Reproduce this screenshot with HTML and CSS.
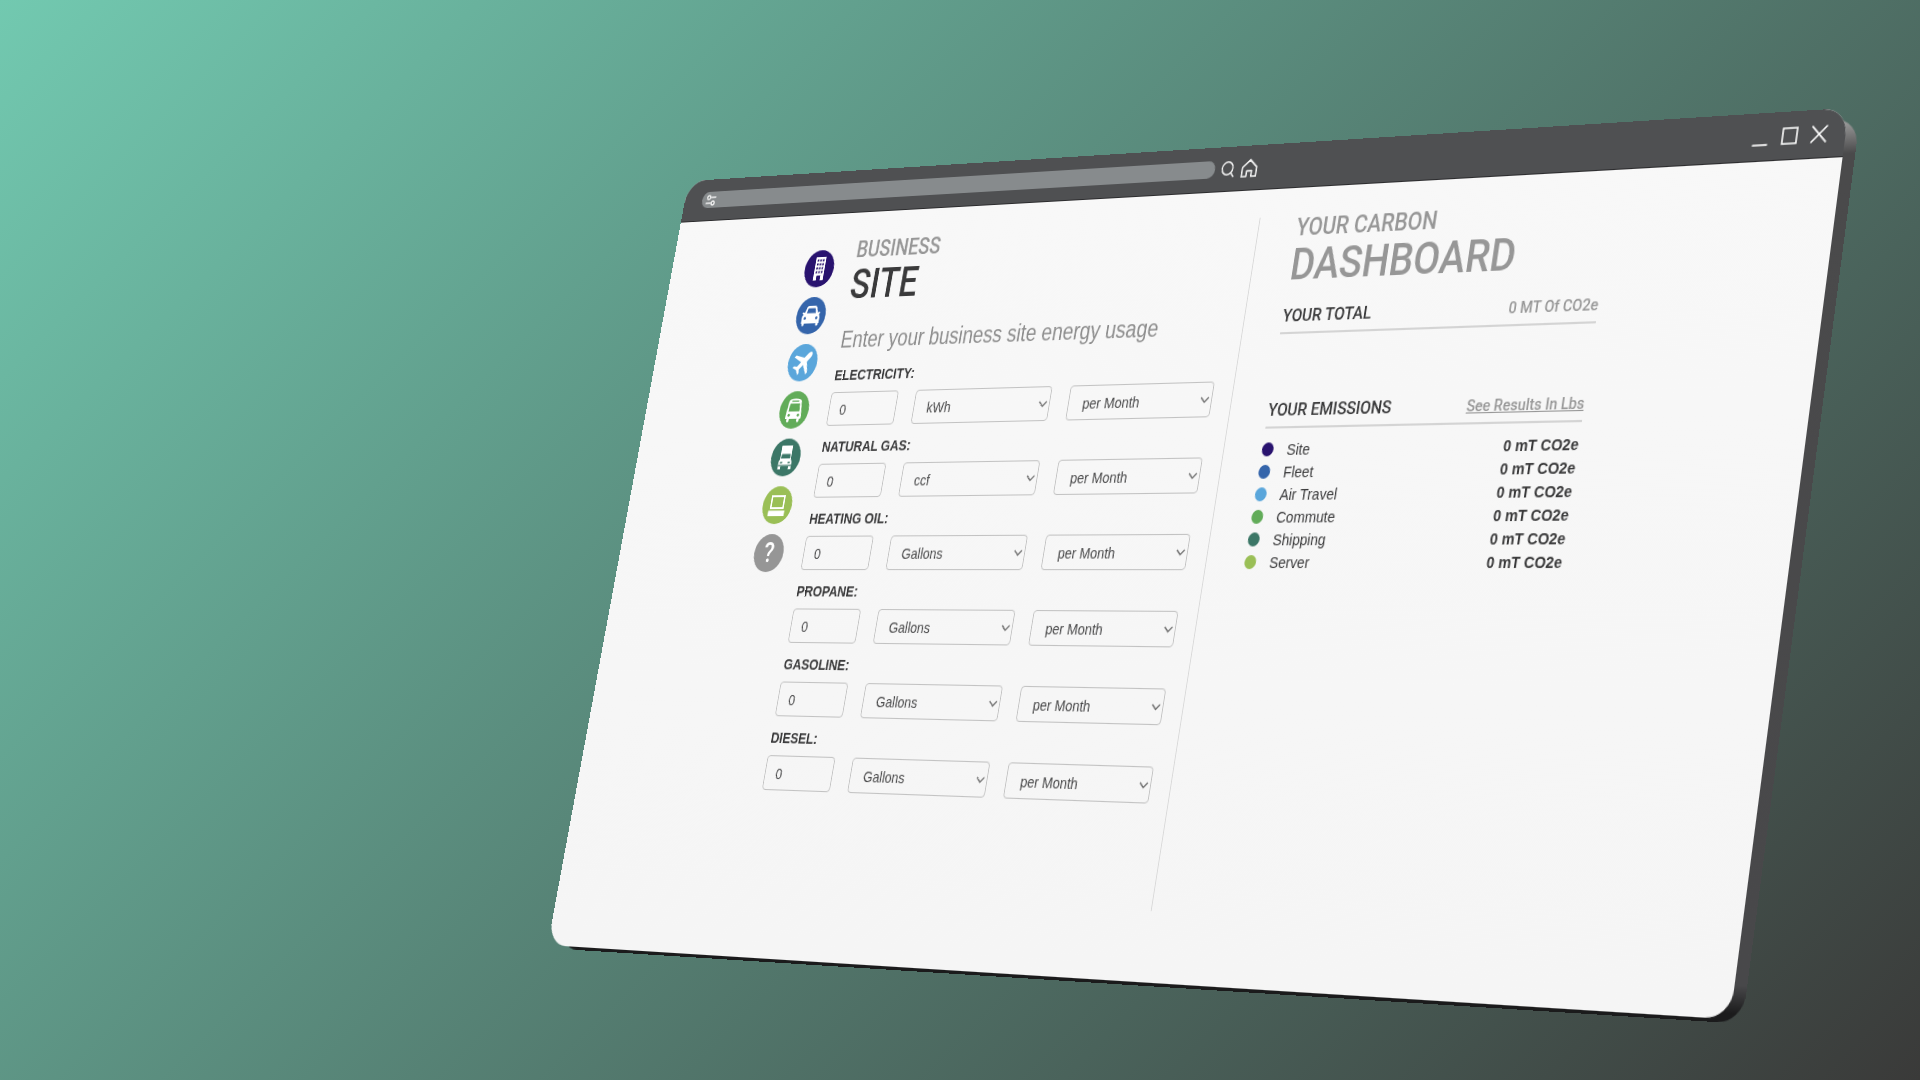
FILE: index.html
```html
<!DOCTYPE html>
<html lang="en">
<head>
<meta charset="utf-8">
<title>Carbon Calculator</title>
<link rel="stylesheet" href="styles.css">
</head>
<body>
<main class="stage">
  <div class="slab">
    <div class="window">
      <header class="titlebar">
        <div class="address">
          <svg class="sliders" viewBox="0 0 14 12" aria-hidden="true"><g fill="none" stroke="#f4f4f4" stroke-width="1.6"><circle cx="4" cy="3" r="2"/><path d="M7 3h6.5M.5 9H7"/><circle cx="10" cy="9" r="2"/></g></svg>
          <input class="url" type="text" aria-label="Address">
        </div>
        <button class="tool tool-search" type="button" aria-label="Search"><svg viewBox="0 0 16 16"><g fill="none" stroke="#f4f4f4" stroke-width="1.5" stroke-linecap="round"><circle cx="7.500" cy="7" r="6.200"/><path d="M12 11.500L15 15.200"/></g></svg></button>
        <button class="tool tool-home" type="button" aria-label="Home"><svg viewBox="0 0 20 18"><path d="M1.8 8.2L10 1l8.200 7.200V17h-5.400v-5.400H7.200V17H1.800z" fill="none" stroke="#f4f4f4" stroke-width="1.7" stroke-linejoin="round"/></svg></button>
        <div class="controls">
          <button class="tool" type="button" aria-label="Minimize"><svg viewBox="0 0 16 16"><path d="M.5 15h15" stroke="#fff" stroke-width="1.6"/></svg></button>
          <button class="tool" type="button" aria-label="Maximize"><svg viewBox="0 0 16 16"><path d="M1 1h14v14H1z" fill="none" stroke="#fff" stroke-width="1.600"/></svg></button>
          <button class="tool" type="button" aria-label="Close"><svg viewBox="0 0 16 16"><path d="M1 1l14 14M15 1L1 15" stroke="#fff" stroke-width="1.700" stroke-linecap="round"/></svg></button>
        </div>
      </header>
      <div class="content">
        <nav class="steps" aria-label="Sections">
          <a href="#site" class="step site" aria-label="Site"><svg viewBox="0 0 38 38"><path fill="#fff" d="M13 7h13v24h-4v-5h-5v5h-4z"/><path stroke="#29136f" stroke-width="2" d="M15 10.500h9M15 14.500h9M15 18.500h9M15 22.500h9" stroke-dasharray="2.200 1.200"/></svg></a>
          <a href="#fleet" class="step fleet" aria-label="Fleet"><svg viewBox="0 0 38 38"><path fill="#fff" d="M12.500 10.500Q13 9 15 9h8q2 0 2.500 1.500L27.500 16l2-.500q1 0 1 1l-1.500 1.500q1.500 1 1.500 3V27h-1v1.500q0 1-1.500 1T26.500 28.500V27h-15v1.500q0 1-1.500 1T8.500 28.500V27h-1v-6q0-2 1.500-3L7.500 16.500q0-1 1-1l2 .500z"/><path fill="#3565ab" d="M14.500 11.500h9l1.500 5H13z"/><circle cx="11.500" cy="21.500" r="1.500" fill="#3565ab"/><circle cx="26.500" cy="21.500" r="1.500" fill="#3565ab"/></svg></a>
          <a href="#air" class="step air" aria-label="Air travel"><svg viewBox="0 0 38 38"><path fill="#fff" d="M29.500 8.500c1.500 1.500.500 4-1 5.500l-4 4 2.500 11-2 2-5-9.500-4.500 4.500.500 4-1.500 1.500-2.500-5-5-2.500L8.500 22.500l4 .500 4.500-4.500L7.500 13.500l2-2 11 2.500 4-4c1.500-1.500 3.500-3 5-1.500z"/></svg></a>
          <a href="#commute" class="step commute" aria-label="Commute"><svg viewBox="0 0 38 38"><path fill="#fff" d="M11 10q.500-2.500 8-2.500T27 10l2 14v4h-2v2q0 1.500-1.500 1.500T24 30v-2H14v2q0 1.500-1.500 1.500T11 30v-2H9v-4z"/><path fill="#62ac59" d="M14.500 9.500h9v1.300h-9zM12.800 12.500h12.400l1 8H11.800z"/><circle cx="13" cy="24.300" r="1.500" fill="#62ac59"/><circle cx="25" cy="24.300" r="1.500" fill="#62ac59"/></svg></a>
          <a href="#shipping" class="step shipping" aria-label="Shipping"><svg viewBox="0 0 38 38"><path fill="#fff" d="M12 7h14v14l1.500 2v8H24v-3H14v3h-3.500v-8l1.500-2z"/><path fill="#3c7767" d="M13.500 15.500h11l.500 4.500H13zM12.500 23.500h3v1.500h-3zM22.500 23.500h3v1.500h-3zM10.500 26.500h17v1.200h-17z"/></svg></a>
          <a href="#server" class="step server" aria-label="Server"><svg viewBox="0 0 38 38"><path fill="#fff" fill-rule="evenodd" d="M10 9h18v14H10zM12 11v10h14V11zM8.500 24.500h21V30h-21z"/></svg></a>
          <a href="#help" class="step help" aria-label="Help">?</a>
        </nav>
        <section class="usage">
          <p class="eyebrow">BUSINESS</p>
          <h1 class="title title-main">SITE</h1>
          <p class="lead">Enter your business site energy usage</p>
          <form class="fields">
            <div class="field"><label class="name" for="electricity">ELECTRICITY:</label>
              <input class="box" id="electricity" type="text" value="0">
              <span class="pick"><select class="box" aria-label="Electricity unit"><option>kWh</option></select><svg class="arrow" viewBox="0 0 10 6"><path d="M1 .8l4 4 4-4"/></svg></span>
              <span class="pick"><select class="box" aria-label="Electricity period"><option>per Month</option></select><svg class="arrow" viewBox="0 0 10 6"><path d="M1 .8l4 4 4-4"/></svg></span></div>
            <div class="field"><label class="name" for="gas">NATURAL GAS:</label>
              <input class="box" id="gas" type="text" value="0">
              <span class="pick"><select class="box" aria-label="Natural gas unit"><option>ccf</option></select><svg class="arrow" viewBox="0 0 10 6"><path d="M1 .8l4 4 4-4"/></svg></span>
              <span class="pick"><select class="box" aria-label="Natural gas period"><option>per Month</option></select><svg class="arrow" viewBox="0 0 10 6"><path d="M1 .8l4 4 4-4"/></svg></span></div>
            <div class="field"><label class="name" for="oil">HEATING OIL:</label>
              <input class="box" id="oil" type="text" value="0">
              <span class="pick"><select class="box" aria-label="Heating oil unit"><option>Gallons</option></select><svg class="arrow" viewBox="0 0 10 6"><path d="M1 .8l4 4 4-4"/></svg></span>
              <span class="pick"><select class="box" aria-label="Heating oil period"><option>per Month</option></select><svg class="arrow" viewBox="0 0 10 6"><path d="M1 .8l4 4 4-4"/></svg></span></div>
            <div class="field"><label class="name" for="propane">PROPANE:</label>
              <input class="box" id="propane" type="text" value="0">
              <span class="pick"><select class="box" aria-label="Propane unit"><option>Gallons</option></select><svg class="arrow" viewBox="0 0 10 6"><path d="M1 .8l4 4 4-4"/></svg></span>
              <span class="pick"><select class="box" aria-label="Propane period"><option>per Month</option></select><svg class="arrow" viewBox="0 0 10 6"><path d="M1 .8l4 4 4-4"/></svg></span></div>
            <div class="field"><label class="name" for="gasoline">GASOLINE:</label>
              <input class="box" id="gasoline" type="text" value="0">
              <span class="pick"><select class="box" aria-label="Gasoline unit"><option>Gallons</option></select><svg class="arrow" viewBox="0 0 10 6"><path d="M1 .8l4 4 4-4"/></svg></span>
              <span class="pick"><select class="box" aria-label="Gasoline period"><option>per Month</option></select><svg class="arrow" viewBox="0 0 10 6"><path d="M1 .8l4 4 4-4"/></svg></span></div>
            <div class="field"><label class="name" for="diesel">DIESEL:</label>
              <input class="box" id="diesel" type="text" value="0">
              <span class="pick"><select class="box" aria-label="Diesel unit"><option>Gallons</option></select><svg class="arrow" viewBox="0 0 10 6"><path d="M1 .8l4 4 4-4"/></svg></span>
              <span class="pick"><select class="box" aria-label="Diesel period"><option>per Month</option></select><svg class="arrow" viewBox="0 0 10 6"><path d="M1 .8l4 4 4-4"/></svg></span></div>
          </form>
        </section>
        <aside class="dashboard">
          <p class="eyebrow">YOUR CARBON</p>
          <h2 class="title">DASHBOARD</h2>
          <div class="bar"><h3 class="bar-name">YOUR TOTAL</h3><span class="bar-side">0 MT Of CO2e</span></div>
          <div class="bar bar-emissions"><h3 class="bar-name">YOUR EMISSIONS</h3><a class="bar-side" href="#lbs">See Results In Lbs</a></div>
          <table class="emissions">
            <tr><th scope="row"><i class="dot site"></i>Site</th><td>0 mT CO2e</td></tr>
            <tr><th scope="row"><i class="dot fleet"></i>Fleet</th><td>0 mT CO2e</td></tr>
            <tr><th scope="row"><i class="dot air"></i>Air Travel</th><td>0 mT CO2e</td></tr>
            <tr><th scope="row"><i class="dot commute"></i>Commute</th><td>0 mT CO2e</td></tr>
            <tr><th scope="row"><i class="dot shipping"></i>Shipping</th><td>0 mT CO2e</td></tr>
            <tr><th scope="row"><i class="dot server"></i>Server</th><td>0 mT CO2e</td></tr>
          </table>
        </aside>
      </div>
    </div>
  </div>
</main>
</body>
</html>
```
FILE: styles.css
```css
* { box-sizing: border-box; }

body {
  margin: 0;
  font-family: "Liberation Sans", Arial, sans-serif;
  font-size: 15px;
  color: #3a3a3b;
}

h1, h2, h3, p { margin: 0; }

.stage {
  min-height: 100vh;
  display: flex;
  justify-content: flex-end;
  align-items: center;
  overflow: hidden;
  background: linear-gradient(135deg, #72c9b0, #3a3a39);
}

/* The window seen in perspective, with its edge showing on the right and below. */
.slab {
  position: relative;
  width: 70vw;
  aspect-ratio: 1344 / 782;
  transform-origin: 0 0;
  transform: matrix3d(0.71287, -0.04963, 0, -0.0001183, -0.1789, 0.94169, 0, -0.00004425, 0, 0, 1, 0, 112.5, 32.1, 0, 1);
}

.slab::before {
  content: "";
  position: absolute;
  inset: 10px -12px -3px 16px;
  border-radius: 24px;
  background: linear-gradient(#a0a0a0, #4a4a4b 4%, #48484a 96%, #1b1b1c 99%);
}

.window {
  position: relative;
  height: 100%;
  display: flex;
  flex-direction: column;
  overflow: hidden;
  border-radius: 24px;
  background: linear-gradient(#f8f8f8, #f5f5f5);
}

.titlebar {
  flex: none;
  display: flex;
  align-items: center;
  height: 44px;
  padding: 0 18px 0 24px;
  background: #4f5052;
  border-bottom: 1px solid #2c2c2e;
}

.address {
  width: 648px;
  height: 17px;
  display: flex;
  align-items: center;
  padding: 0 5px;
  border-radius: 9px;
  background: #878b8d;
}

.sliders { width: 14px; height: 12px; }

.url {
  flex: 1;
  min-width: 0;
  height: 17px;
  border: 0;
  background: none;
  color: #fff;
  font: inherit;
}

.tool {
  width: 16px;
  height: 16px;
  padding: 0;
  border: 0;
  background: none;
}

.tool svg { display: block; width: 100%; height: 100%; }
.tool-search { margin-left: 7px; }
.tool-home { width: 20px; height: 18px; margin-left: 7px; }
.controls { display: flex; gap: 13px; margin-left: auto; }

.content {
  flex: 1;
  display: grid;
  grid-template-columns: 38px 515fr 385fr;
  padding: 27px 226px 64px 180px;
}

.steps {
  display: flex;
  flex-direction: column;
  gap: 10px;
  padding-top: 10px;
}

.step {
  display: block;
  height: 38px;
  border-radius: 50%;
  color: #fff;
  font: 500 27px/38px Roboto, sans-serif;
  text-align: center;
  text-decoration: none;
}

.site { background: #29136f; }
.fleet { background: #3565ab; }
.air { background: #5aa6db; }
.commute { background: #62ac59; }
.shipping { background: #3c7767; }
.server { background: #9abf56; }
.help { background: #969696; }

.usage { padding: 0 22px 0 26px; }

.eyebrow {
  font: 500 23px/24px Roboto, "Liberation Sans", sans-serif;
  color: #979797;
}

.title {
  margin-top: 1px;
  font: 500 42px/44px Roboto, "Liberation Sans", sans-serif;
  color: #979797;
}

.title-main { color: #3a3a3b; }

.lead {
  margin-top: 20px;
  font-size: 23px;
  line-height: 28px;
  color: #8e8e8e;
}

.fields {
  display: grid;
  gap: 12px;
  margin-top: 13px;
}

.field {
  display: grid;
  grid-template-columns: 86fr 169fr 169fr;
  column-gap: 22px;
  row-gap: 8px;
}

.name {
  grid-column: 1 / -1;
  line-height: 18px;
  font-weight: bold;
}

.box {
  width: 100%;
  min-width: 0;
  height: 34px;
  margin: 0;
  padding: 0 13px;
  border: 1px solid #c2c2c2;
  border-radius: 4px;
  background: none;
  color: #4a4a4b;
  font: inherit;
  appearance: none;
}

.pick { display: grid; align-items: center; }
.pick .box { grid-area: 1 / 1; padding: 0 16px; }

.arrow {
  grid-area: 1 / 1;
  justify-self: end;
  width: 11px;
  height: 7px;
  margin-right: 3px;
  fill: none;
  stroke: #6a6a6a;
  stroke-width: 1.3;
  pointer-events: none;
}

.dashboard {
  padding-left: 43px;
  border-left: 1px solid #d9d9d9;
  font-family: Roboto, "Liberation Sans", sans-serif;
}

.bar {
  display: flex;
  justify-content: space-between;
  align-items: baseline;
  margin-top: 14px;
  padding-bottom: 3px;
  border-bottom: 2px solid #d4d4d4;
  line-height: 24px;
}

.bar-emissions { margin-top: 59px; }
.bar-name { font-size: 17px; font-weight: 500; }
.bar-side { font-weight: 500; color: #979797; }

.emissions {
  width: 100%;
  margin-top: 9px;
  border-collapse: collapse;
  font-family: "Liberation Sans", Arial, sans-serif;
  line-height: 21px;
}

.emissions th, .emissions td { padding: 0; }

.emissions th {
  display: flex;
  align-items: center;
  gap: 15px;
  font-weight: normal;
}

.emissions td { text-align: right; font-weight: bold; }
.dot { width: 13px; height: 13px; border-radius: 50%; }
```
